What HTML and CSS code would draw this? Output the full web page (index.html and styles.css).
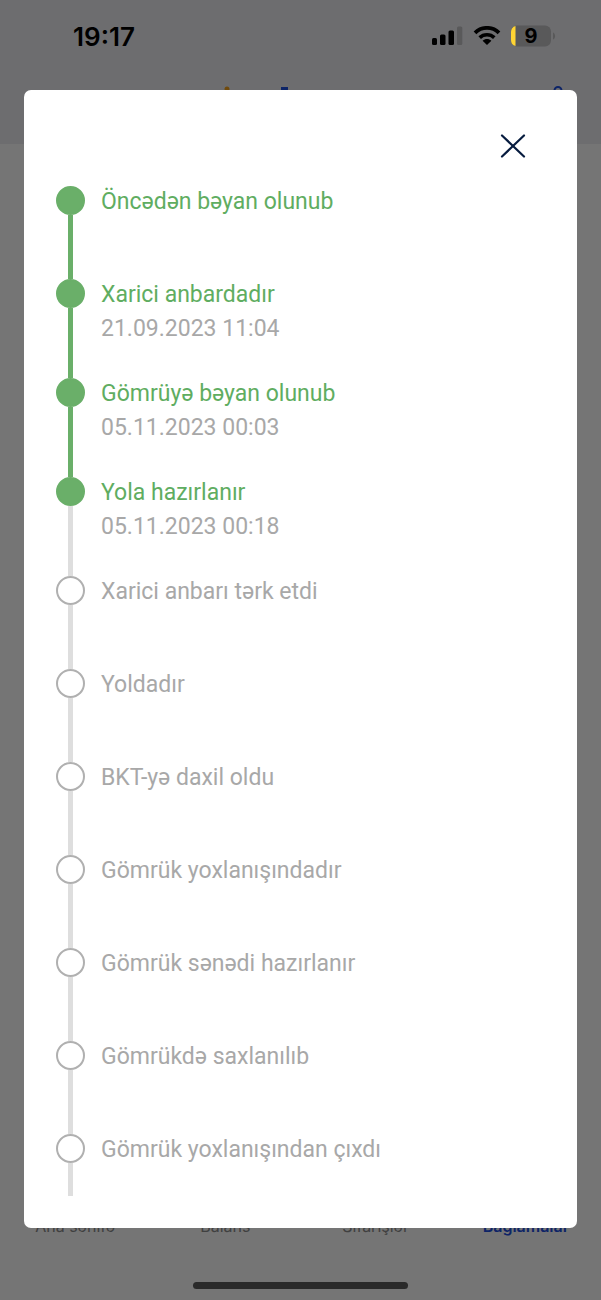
FILE: index.html
```html
<!DOCTYPE html>
<html lang="az">
<head>
    <meta charset="UTF-8">
    <meta name="viewport" content="width=device-width, initial-scale=1.0">
    <title>Bağlamalar</title>
    <link rel="stylesheet" href="styles.css">
</head>
<body>
    <div class="status-bar">
        <span class="time">19:17</span>
        <div class="status-icons">
            <svg width="31" height="20" viewBox="0 0 31 20">
                <rect x="0" y="12" width="5" height="7" rx="1.5"/>
                <rect x="8" y="8.5" width="5.5" height="10.5" rx="1.5"/>
                <rect x="16.5" y="4.5" width="5.5" height="14.5" rx="1.5"/>
                <rect x="25" y="0.5" width="5.3" height="18.5" rx="1.5" fill="#59595a"/>
            </svg>
            <svg width="28" height="20" viewBox="0 0 28 20">
                <path d="M2 6.8C8.600 0.200 19.400 0.200 26 6.8" fill="none" stroke="#000" stroke-width="3.8"/>
                <path d="M6.7 11.6C10.700 7.700 17.300 7.700 21.300 11.6" fill="none" stroke="#000" stroke-width="3.6"/>
                <path d="M9.600 14.700C12.200 12.400 15.800 12.400 18.400 14.700L14 19Z"/>
            </svg>
            <svg width="45" height="22" viewBox="0 0 45 22">
                <rect x="0" y="0.5" width="40" height="21" rx="6" fill="#59595a"/>
                <path d="M4.500 0.900V21.100C1.500 20.500 0 18 0 15V7C0 4 1.500 1.500 4.500 0.900Z" fill="#ffd534"/>
                <path d="M42 7.500C44.800 8.500 44.800 13.500 42 14.500Z" fill="#59595a"/>
                <text class="battery-level" x="20" y="18" text-anchor="middle">9</text>
            </svg>
        </div>
    </div>

    <div class="page">
        <header class="header">
            <svg class="logo" width="160" height="34" viewBox="0 0 160 34">
                <circle cx="7" cy="3" r="2.500" fill="#f5a11c"/>
                <rect x="5" y="8" width="4" height="22" fill="#f5a11c"/>
                <rect x="61" y="1" width="7" height="29" fill="#1d4fe0"/>
            </svg>
            <svg class="bell" width="28" height="34" viewBox="0 0 28 34" fill="none" stroke="#1d4fe0" stroke-width="2">
                <circle cx="14" cy="4.500" r="3.500"/>
                <path d="M5 28V18C5 6 23 6 23 18V28Z"/>
            </svg>
        </header>
        <main class="content"></main>
        <nav class="tabs">
            <a href="#">Ana səhifə</a>
            <a href="#">Balans</a>
            <a href="#">Sifarişlər</a>
            <a href="#" class="active">Bağlamalar</a>
        </nav>
    </div>

    <div class="overlay">
        <div class="modal" role="dialog" aria-modal="true">
            <button type="button" class="close" aria-label="Bağla">
                <svg width="26" height="26" viewBox="0 0 26 26">
                    <path d="M2 2.500L24 23.500M24 2.500L2 23.500" fill="none" stroke="#071c3f" stroke-width="2.200" stroke-linecap="round"/>
                </svg>
            </button>
            <ol class="steps">
                <li class="step done">
                    <div class="rail"><span class="dot"></span></div>
                    <div class="info"><h3>Öncədən bəyan olunub</h3></div>
                </li>
                <li class="step done">
                    <div class="rail"><span class="dot"></span></div>
                    <div class="info">
                        <h3>Xarici anbardadır</h3>
                        <p>21.09.2023 11:04</p>
                    </div>
                </li>
                <li class="step done">
                    <div class="rail"><span class="dot"></span></div>
                    <div class="info">
                        <h3>Gömrüyə bəyan olunub</h3>
                        <p>05.11.2023 00:03</p>
                    </div>
                </li>
                <li class="step done current">
                    <div class="rail"><span class="dot"></span></div>
                    <div class="info">
                        <h3>Yola hazırlanır</h3>
                        <p>05.11.2023 00:18</p>
                    </div>
                </li>
                <li class="step">
                    <div class="rail"><span class="dot"></span></div>
                    <div class="info"><h3>Xarici anbarı tərk etdi</h3></div>
                </li>
                <li class="step">
                    <div class="rail"><span class="dot"></span></div>
                    <div class="info"><h3>Yoldadır</h3></div>
                </li>
                <li class="step">
                    <div class="rail"><span class="dot"></span></div>
                    <div class="info"><h3>BKT-yə daxil oldu</h3></div>
                </li>
                <li class="step">
                    <div class="rail"><span class="dot"></span></div>
                    <div class="info"><h3>Gömrük yoxlanışındadır</h3></div>
                </li>
                <li class="step">
                    <div class="rail"><span class="dot"></span></div>
                    <div class="info"><h3>Gömrük sənədi hazırlanır</h3></div>
                </li>
                <li class="step">
                    <div class="rail"><span class="dot"></span></div>
                    <div class="info"><h3>Gömrükdə saxlanılıb</h3></div>
                </li>
                <li class="step">
                    <div class="rail"><span class="dot"></span></div>
                    <div class="info"><h3>Gömrük yoxlanışından çıxdı</h3></div>
                </li>
            </ol>
        </div>
    </div>
    <div class="home-indicator"></div>
</body>
</html>
```
FILE: styles.css
```css
* {
    box-sizing: border-box;
}
body {
    margin: 0;
    min-height: 100vh;
    font-family: Roboto, Arial, sans-serif;
    background-color: #fff;
}
.page {
    display: flex;
    flex-direction: column;
    min-height: 100vh;
    padding-top: 72px;
    background-color: #ededf2;
}

/* System status bar stays above the dimmed page */
.status-bar {
    position: absolute;
    top: 0;
    left: 0;
    right: 0;
    z-index: 3;
    display: flex;
    justify-content: space-between;
    align-items: center;
    height: 72px;
    padding: 0 45px 0 73px;
}
.time {
    font-family: Inter, Arial, sans-serif;
    font-size: 26px;
    font-weight: 600;
}
.status-icons {
    display: flex;
    align-items: center;
    gap: 10px;
}
.battery-level {
    font-family: Inter, Arial, sans-serif;
    font-size: 20px;
    font-weight: 700;
}

/* Page behind the modal */
.header {
    display: flex;
    justify-content: space-between;
    align-items: flex-start;
    height: 72px;
    padding: 14px 29px 0 220px;
}
.content {
    flex: 1;
    background-color: #fefefe;
}
.tabs {
    display: grid;
    grid-template-columns: repeat(4, 1fr);
    padding: 48px 0 64px;
    background-color: #fff;
}
.tabs a {
    font-family: Inter, Arial, sans-serif;
    font-size: 16px;
    line-height: 20px;
    text-align: center;
    text-decoration: none;
    color: #8c8c8c;
}
.tabs .active {
    font-weight: 600;
    color: #1d4fe0;
}
.home-indicator {
    position: absolute;
    bottom: 11px;
    left: 50%;
    z-index: 3;
    width: 215px;
    height: 7px;
    margin-left: -108px;
    border-radius: 4px;
    background-color: #2a2a2a;
}

/* Modal */
.overlay {
    position: absolute;
    top: 0;
    left: 0;
    right: 0;
    min-height: 100%;
    z-index: 2;
    padding: 90px 24px 72px;
    background-color: rgba(0, 0, 0, 0.54);
}
.modal {
    padding: 32px;
    border-radius: 7px;
    background-color: #fff;
}
.close {
    display: flex;
    justify-content: center;
    align-items: center;
    width: 48px;
    height: 48px;
    margin: 0 8px 16px auto;
    padding: 0;
    border: none;
    background: none;
    cursor: pointer;
}

/* Steps */
.steps {
    margin: 0;
    padding: 0;
    list-style: none;
}
.step {
    display: flex;
    gap: 16px;
    min-height: 93px;
    color: #a8a8a8;
}
.step:last-child {
    min-height: 62px;
}
.rail {
    display: flex;
    flex-direction: column;
    align-items: center;
    width: 29px;
}
.rail::after {
    content: "";
    flex: 1;
    width: 5px;
    background-color: #dedede;
}
.dot {
    width: 29px;
    height: 29px;
    border: 2px solid #b0b0b0;
    border-radius: 50%;
}
.info {
    padding-bottom: 34px;
}
.step:last-child .info {
    padding-bottom: 0;
}
.info h3,
.info p {
    margin: 0;
    font-size: 23px;
    font-weight: 400;
    line-height: 31px;
}
.info p {
    margin-top: 3px;
    color: #a8a8a8;
}
.done h3 {
    color: #5fad61;
}
.done .dot {
    border-color: #6aaf69;
    background-color: #6aaf69;
}
.done:not(.current) .rail::after {
    background-color: #6aaf69;
}
```
